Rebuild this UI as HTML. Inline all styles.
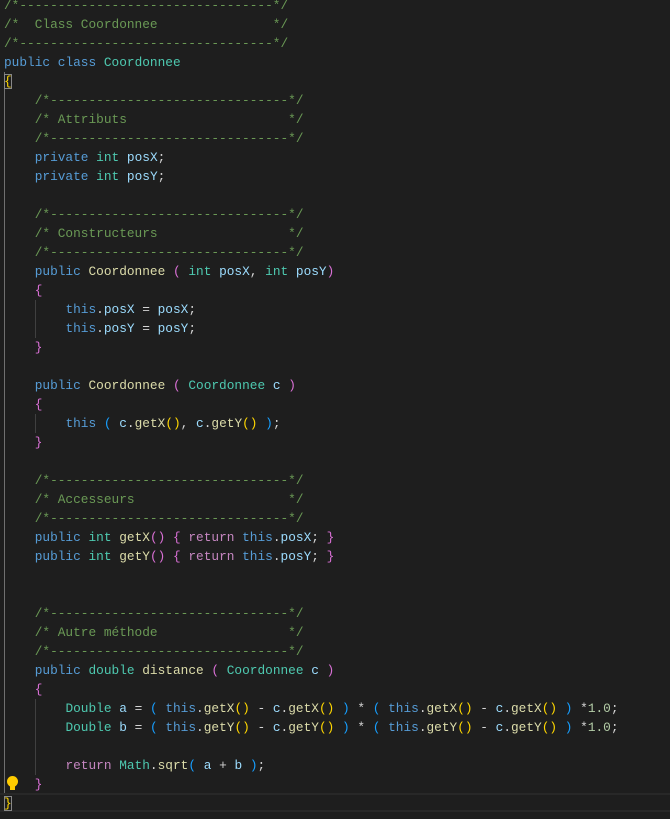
<!DOCTYPE html>
<html><head><meta charset="utf-8"><style>
html,body{margin:0;padding:0;background:#1e1e1e;width:670px;height:819px;overflow:hidden;position:relative}
#code{position:absolute;left:4px;top:-4px;font-family:"Liberation Mono",monospace;font-size:12.8px;line-height:19px;color:#d4d4d4;white-space:pre}
.c{color:#6a9955}.k{color:#569cd6}.t{color:#4ec9b0}.v{color:#9cdcfe}.f{color:#dcdcaa}.r{color:#c586c0}.n{color:#b5cea8}
.b1{color:#ffd700}.b2{color:#da70d6}.b3{color:#179fff}
.g{position:absolute;width:1px;background:#404040}
.box{outline:1px solid #888;outline-offset:-1px}
</style></head><body>
<div style="position:absolute;left:0;top:793px;width:670px;height:19px;border-top:2px solid #282828;border-bottom:2px solid #282828;box-sizing:border-box"></div>
<div class="g" style="left:4px;top:72px;height:721px;background:#707070"></div>
<div class="g" style="left:35px;top:300px;height:38px"></div>
<div class="g" style="left:35px;top:414px;height:19px"></div>
<div class="g" style="left:35px;top:699px;height:76px"></div>
<div style="position:absolute;left:7px;top:776px;width:11px;height:11px;border-radius:50%;background:#ffcc00"></div>
<div style="position:absolute;left:10px;top:786px;width:5px;height:4px;background:#ffcc00"></div>
<div id="code"><span class="c">/*---------------------------------*/
/*  Class Coordonnee               */
/*---------------------------------*/</span>
<span class="k">public</span> <span class="k">class</span> <span class="t">Coordonnee</span>
<span class="b1 box">{</span>
    <span class="c">/*-------------------------------*/
    /* Attributs                     */
    /*-------------------------------*/</span>
    <span class="k">private</span> <span class="t">int</span> <span class="v">posX</span>;
    <span class="k">private</span> <span class="t">int</span> <span class="v">posY</span>;

    <span class="c">/*-------------------------------*/
    /* Constructeurs                 */
    /*-------------------------------*/</span>
    <span class="k">public</span> <span class="f">Coordonnee</span> <span class="b2">(</span> <span class="t">int</span> <span class="v">posX</span>, <span class="t">int</span> <span class="v">posY</span><span class="b2">)</span>
    <span class="b2">{</span>
        <span class="k">this</span>.<span class="v">posX</span> = <span class="v">posX</span>;
        <span class="k">this</span>.<span class="v">posY</span> = <span class="v">posY</span>;
    <span class="b2">}</span>

    <span class="k">public</span> <span class="f">Coordonnee</span> <span class="b2">(</span> <span class="t">Coordonnee</span> <span class="v">c</span> <span class="b2">)</span>
    <span class="b2">{</span>
        <span class="k">this</span> <span class="b3">(</span> <span class="v">c</span>.<span class="f">getX</span><span class="b1">()</span>, <span class="v">c</span>.<span class="f">getY</span><span class="b1">()</span> <span class="b3">)</span>;
    <span class="b2">}</span>

    <span class="c">/*-------------------------------*/
    /* Accesseurs                    */
    /*-------------------------------*/</span>
    <span class="k">public</span> <span class="t">int</span> <span class="f">getX</span><span class="b2">()</span> <span class="b2">{</span> <span class="r">return</span> <span class="k">this</span>.<span class="v">posX</span>; <span class="b2">}</span>
    <span class="k">public</span> <span class="t">int</span> <span class="f">getY</span><span class="b2">()</span> <span class="b2">{</span> <span class="r">return</span> <span class="k">this</span>.<span class="v">posY</span>; <span class="b2">}</span>


    <span class="c">/*-------------------------------*/
    /* Autre méthode                 */
    /*-------------------------------*/</span>
    <span class="k">public</span> <span class="t">double</span> <span class="f">distance</span> <span class="b2">(</span> <span class="t">Coordonnee</span> <span class="v">c</span> <span class="b2">)</span>
    <span class="b2">{</span>
        <span class="t">Double</span> <span class="v">a</span> = <span class="b3">(</span> <span class="k">this</span>.<span class="f">getX</span><span class="b1">()</span> - <span class="v">c</span>.<span class="f">getX</span><span class="b1">()</span> <span class="b3">)</span> * <span class="b3">(</span> <span class="k">this</span>.<span class="f">getX</span><span class="b1">()</span> - <span class="v">c</span>.<span class="f">getX</span><span class="b1">()</span> <span class="b3">)</span> *<span class="n">1.0</span>;
        <span class="t">Double</span> <span class="v">b</span> = <span class="b3">(</span> <span class="k">this</span>.<span class="f">getY</span><span class="b1">()</span> - <span class="v">c</span>.<span class="f">getY</span><span class="b1">()</span> <span class="b3">)</span> * <span class="b3">(</span> <span class="k">this</span>.<span class="f">getY</span><span class="b1">()</span> - <span class="v">c</span>.<span class="f">getY</span><span class="b1">()</span> <span class="b3">)</span> *<span class="n">1.0</span>;

        <span class="r">return</span> <span class="t">Math</span>.<span class="f">sqrt</span><span class="b3">(</span> <span class="v">a</span> + <span class="v">b</span> <span class="b3">)</span>;
    <span class="b2">}</span>
<span class="b1 box">}</span></div>
</body></html>
